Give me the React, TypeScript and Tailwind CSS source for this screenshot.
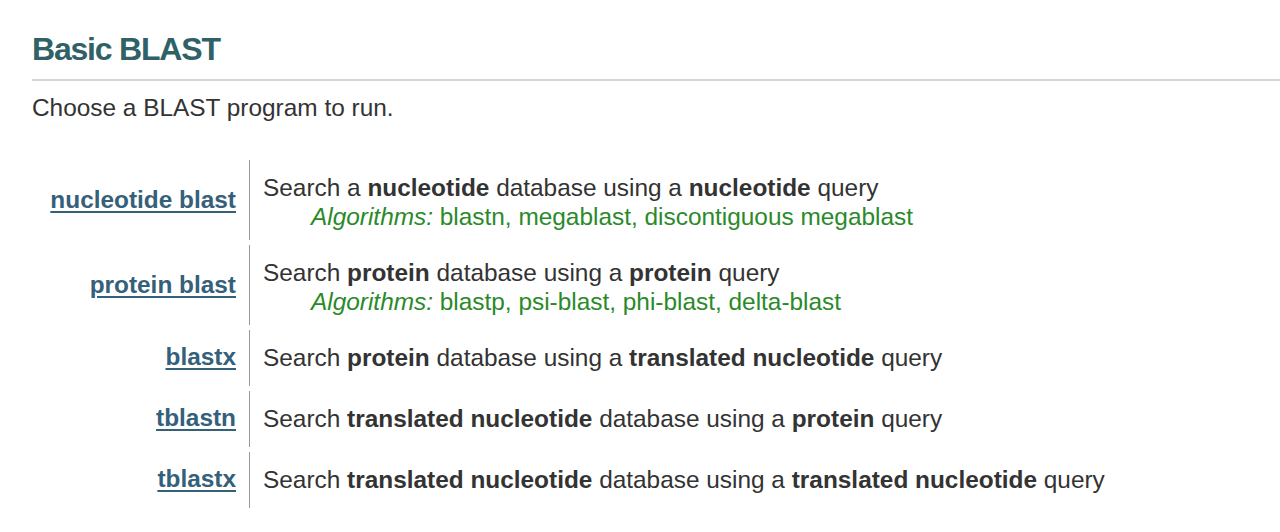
const rows = [
  {
    name: "nucleotide blast",
    desc: (
      <>
        Search a <b>nucleotide</b> database using a <b>nucleotide</b> query
      </>
    ),
    algos: "blastn, megablast, discontiguous megablast",
  },
  {
    name: "protein blast",
    desc: (
      <>
        Search <b>protein</b> database using a <b>protein</b> query
      </>
    ),
    algos: "blastp, psi-blast, phi-blast, delta-blast",
  },
  {
    name: "blastx",
    desc: (
      <>
        Search <b>protein</b> database using a <b>translated nucleotide</b> query
      </>
    ),
  },
  {
    name: "tblastn",
    desc: (
      <>
        Search <b>translated nucleotide</b> database using a <b>protein</b> query
      </>
    ),
  },
  {
    name: "tblastx",
    desc: (
      <>
        Search <b>translated nucleotide</b> database using a <b>translated nucleotide</b> query
      </>
    ),
  },
]

export default function App() {
  return (
    <div className="w-[1280px] h-[532px] bg-white overflow-hidden pl-8 pt-[27px] font-['Liberation_Sans',Arial,sans-serif] text-[#333]">
      {/* heading */}
      <h2 className="text-[32px] leading-[44px] font-bold tracking-[-1.2px] text-[#2f6166]">Basic BLAST</h2>
      <div className="mt-[8px] h-[2px] bg-[#d4d4d4]" />
      <p className="mt-[12px] text-[24.4px] leading-[29px]">Choose a BLAST program to run.</p>

      {/* program table */}
      <div className="mt-[38px] flex flex-col gap-[5px]">
        {rows.map((r) => (
          <div key={r.name} className={"flex " + (r.algos ? "h-[80px]" : "h-[56px]")}>
            <div
              className={
                "w-[218px] shrink-0 flex items-center justify-end pr-[13px] border-r border-[#999] " +
                (r.algos ? "pb-[2px]" : "pb-[4px]")
              }
            >
              <a href="#" className="text-[24.4px] leading-[29px] font-bold underline underline-offset-[3px] decoration-[1.5px] text-[#35607a]">
                {r.name}
              </a>
            </div>
            <div
              className={
                "flex flex-col justify-center pl-[13px] text-[24.4px] leading-[29px] " +
                (r.algos ? "pt-[4px]" : "pb-[2px]")
              }
            >
              <div>{r.desc}</div>
              {r.algos && (
                <div className="pl-[48px] text-[#2a8a2a]">
                  <i>Algorithms:</i> {r.algos}
                </div>
              )}
            </div>
          </div>
        ))}
      </div>
    </div>
  )
}
